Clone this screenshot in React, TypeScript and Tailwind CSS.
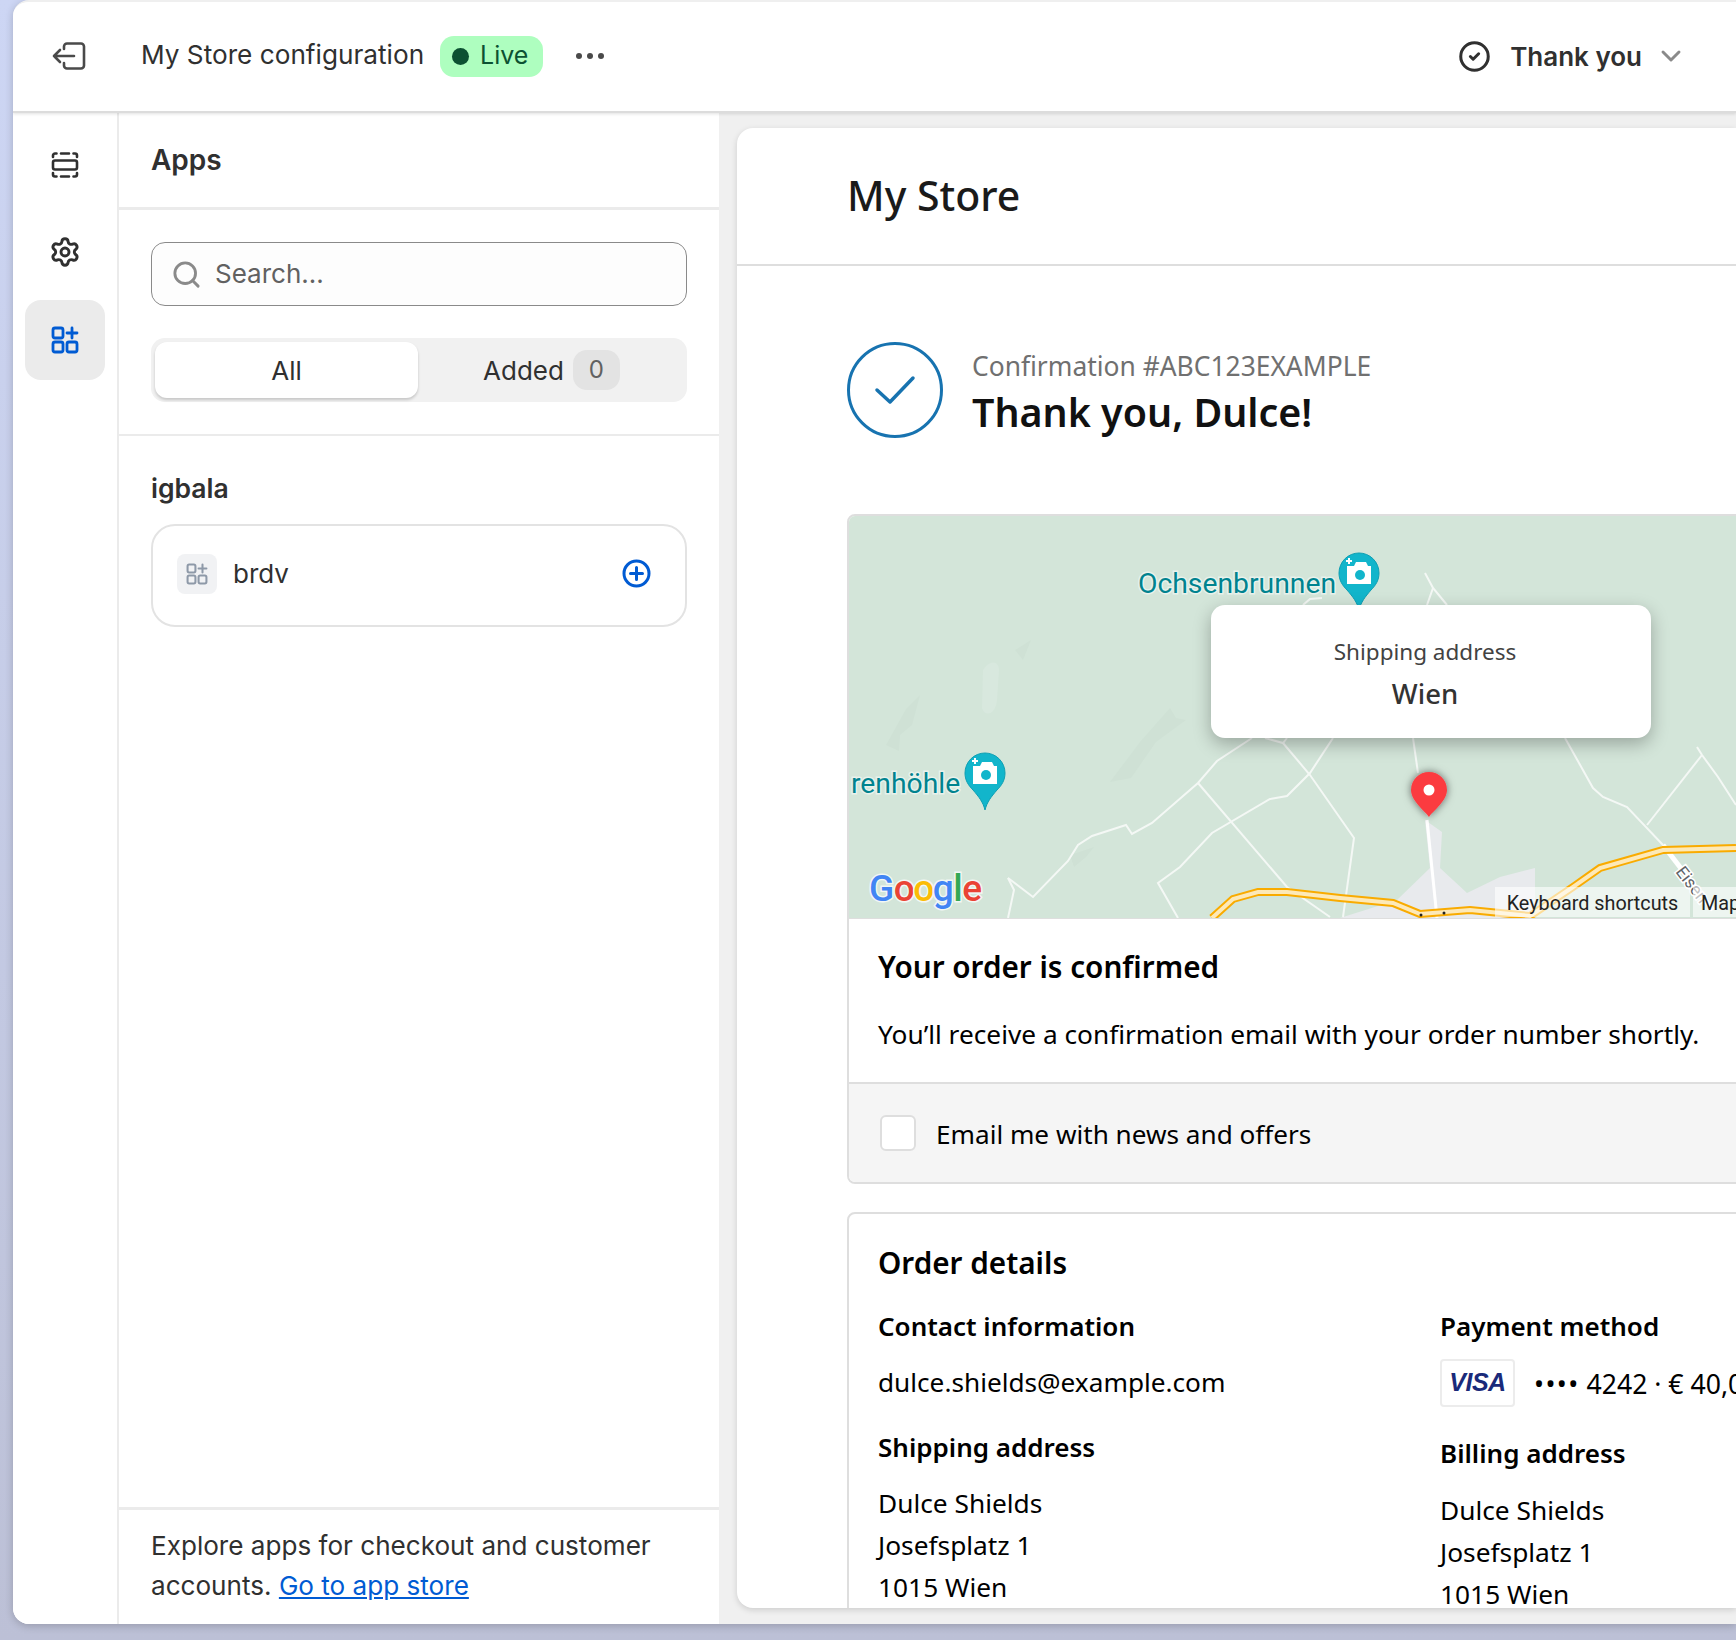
import React from 'react';
import { ChevronDown, CircleCheck, Search, Settings } from 'lucide-react';

const inter = 'font-[Inter,sans-serif]';

const ExitIcon = () => (
  <svg width="36" height="30" viewBox="0 0 36 30" fill="none" stroke="#4a4a4a" strokeWidth="2.6" strokeLinecap="round" strokeLinejoin="round">
    <path d="M13 8V5.5A3 3 0 0 1 16 2.5h14a3 3 0 0 1 3 3v19a3 3 0 0 1-3 3H16a3 3 0 0 1-3-3V22" />
    <path d="M23 15H3M9 9l-6 6 6 6" />
  </svg>
);

const SectionsIcon = () => (
  <svg width="28" height="28" viewBox="0 0 28 28" fill="none" stroke="#303030" strokeWidth="2.6" strokeLinecap="round" strokeLinejoin="round">
    <path d="M2 6V4.5A2 2 0 0 1 4 2.5h1.500M10 2.500h8M22.500 2.500H24a2 2 0 0 1 2 2V6" />
    <rect x="2" y="9.500" width="24" height="9" rx="2" />
    <path d="M2 22v1.500a2 2 0 0 0 2 2h1.500M10 25.500h8M22.500 25.500H24a2 2 0 0 0 2-2V22" />
  </svg>
);

const AppsIcon = ({ color, size, stroke }: { color: string; size: number; stroke: number }) => (
  <svg width={size} height={size} viewBox="0 0 28 28" fill="none" stroke={color} strokeWidth={stroke} strokeLinecap="round" strokeLinejoin="round">
    <rect x="2" y="2" width="10" height="10" rx="2" />
    <rect x="2" y="16" width="10" height="10" rx="2" />
    <rect x="16" y="16" width="10" height="10" rx="2" />
    <path d="M21 2v10M16 7h10" />
  </svg>
);

const CameraPin = ({ x, y }: { x: number; y: number }) => (
  <g transform={`translate(${x} ${y})`}>
    <path d="M20 57c-2-8-6-13-12-20C3 32 0 27 0 20a20 20 0 0 1 40 0c0 7-3 12-8 17-6 7-10 12-12 20z" fill="#12b5cb" stroke="#0e9fb3" strokeWidth="1" />
    <path d="M8 13h7l2-4h10l2 4h3v18H8z" fill="#fff" />
    <circle cx="21" cy="22" r="5" fill="#12b5cb" />
    <path d="M10 11V5M7 8h6" stroke="#fff" strokeWidth="2" />
  </g>
);

const MapArt = () => {
  const roads = [
    '1008,878 1033,897 1068,861 1078,845 1092,836 1126,825 1132,834 1152,823 1198,783 1217,761 1252,738',
    '1008,878 1014,890 1008,918',
    '1198,783 1287,887 1330,917',
    '1178,918 1158,883 1180,867 1212,833 1270,799 1287,796 1310,773 1333,738',
    '1265,738 1283,743 1287,738',
    '1283,743 1310,775 1354,838 1343,917',
    '1425,573 1433,588 1447,605',
    '1433,588 1427,605',
    '1303,605 1310,599 1322,598',
    '1413,738 1418,773',
    '1565,738 1593,788 1603,797 1627,807 1663,845',
    '1647,825 1702,755',
    '1697,747 1702,755 1718,777 1736,805',
  ];
  const highway = '1212,918 1233,899 1258,892 1287,892 1340,898 1393,903 1420,914 1470,910 1530,916 1573,887 1600,868 1663,850 1736,848';
  return (
    <svg className="block" width="889" height="404" viewBox="847 514 889 404">
      <rect x="847" y="514" width="889" height="404" fill="#d3e5d9" />
      <g fill="#cfe1d5">
        <path d="M983 670c8-12 16-8 16 0l-2 30c-1 14-12 18-15 8z" fill="#d8e8de" />
        <path d="M886 745l20-36 14-14-8 30-12 10-1 16z" />
        <path d="M1110 782l30-40 30-34 6 10 10 2-30 22-25 36z" />
        <path d="M1015 650l16-10-8 20z" />
        <path d="M1070 855l24-8-8 10-12 10z" />
      </g>
      <polygon points="1425,820 1442,832 1440,868 1467,893 1500,877 1535,868 1535,918 1340,918 1397,900 1430,868" fill="#e8eaed" />
      {roads.map((points) => (
        <polyline key={points} points={points} fill="none" stroke="#f4f8f5" strokeWidth="2" />
      ))}
      <path d="M1427 820l10 98" stroke="#fff" strokeWidth="3" />
      <path d="M1663 845l50 65" stroke="#fff" strokeWidth="5" />
      <polyline points={highway} fill="none" stroke="#f9ab00" strokeWidth="8" />
      <polyline points={highway} fill="none" stroke="#fde9b8" strokeWidth="4" />
      <circle cx="1421" cy="915" r="1.500" fill="#222" />
      <circle cx="1444" cy="913" r="1.500" fill="#222" />
      <text x="1138" y="593" fontFamily="Roboto, sans-serif" fontSize="28.300" fill="#00838f" stroke="#e8f2ec" strokeWidth="3" paintOrder="stroke">Ochsenbrunnen</text>
      <CameraPin x={1339} y={553} />
      <text x="851" y="793" fontFamily="Roboto, sans-serif" fontSize="28.300" fill="#00838f" stroke="#e8f2ec" strokeWidth="3" paintOrder="stroke">renhöhle</text>
      <CameraPin x={965} y={753} />
      <text transform="translate(1675 872) rotate(52)" fontFamily="Roboto, sans-serif" fontSize="17" fill="#5f6368" stroke="#fff" strokeWidth="3" paintOrder="stroke">Eisen</text>
      <text x="869" y="901" fontFamily="Roboto, sans-serif" fontSize="37" fontWeight="500" stroke="#f2f7f4" strokeWidth="3" paintOrder="stroke">
        <tspan fill="#4285f4">G</tspan>
        <tspan fill="#ea4335" dx="-0.500">o</tspan>
        <tspan fill="#fbbc05" dx="-1.500">o</tspan>
        <tspan fill="#4285f4" dx="-1.500">g</tspan>
        <tspan fill="#34a853" dx="-0.500">l</tspan>
        <tspan fill="#ea4335" dx="-0.500">e</tspan>
      </text>
      <defs>
        <filter id="pinShadow" x="-50%" y="-50%" width="200%" height="200%">
          <feDropShadow dx="0" dy="0" stdDeviation="4" floodColor="#000" floodOpacity="0.55" />
        </filter>
      </defs>
      <path d="M1429 817c-3-5-18-16-18-27a18 18 0 0 1 36 0c0 11-15 22-18 27z" fill="#fb3b41" filter="url(#pinShadow)" />
      <circle cx="1429" cy="790" r="5.500" fill="#fff" />
    </svg>
  );
};

const AddressLines = () => (
  <div className="text-[26.3px] leading-[42px] text-black">
    <div>Dulce Shields</div>
    <div>Josefsplatz 1</div>
    <div>1015 Wien</div>
  </div>
);

const Sidebar = () => (
  <aside className={`w-[600px] shrink-0 flex flex-col bg-white ${inter}`}>
    <div className="h-[97px] shrink-0 flex items-center px-[32px] border-b-[3px] border-[#ebebeb]">
      <h2 className="text-[28px] font-semibold text-[#303030]">Apps</h2>
    </div>
    <div className="h-[226px] shrink-0 px-[32px] pt-[32px] border-b-[2px] border-[#ebebeb]">
      <div className="h-[64px] rounded-[14px] border border-[#8a8a8a] bg-[#fdfdfd] flex items-center pl-[19px] gap-[13px]">
        <Search size={31} strokeWidth={2.200} className="text-[#8a8a8a]" />
        <span className="text-[26px] text-[#616161] -mt-[2px]">Search...</span>
      </div>
      <div className="mt-[32px] h-[64px] rounded-[14px] bg-[#f1f1f1] flex items-center p-[4px]">
        <div className="w-[263px] h-[56px] rounded-[12px] bg-white shadow-[0_2px_3px_rgba(0,0,0,0.18)] flex items-center justify-center text-[26px] text-[#303030]">
          All
        </div>
        <div className="flex-1 flex items-center justify-center gap-[9px] text-[26px] text-[#303030] pl-[2px]">
          <span>Added</span>
          <span className="w-[47px] h-[40px] rounded-[14px] bg-[#e3e3e3] flex items-center justify-center text-[#616161] text-[24px]">0</span>
        </div>
      </div>
    </div>
    <div className="flex-1 px-[32px] pt-[35px]">
      <h3 className="text-[26.5px] font-semibold leading-[34px] text-[#303030]">igbala</h3>
      <div className="mt-[19px] h-[103px] rounded-[24px] border-[2px] border-[#e3e3e3] flex items-center pl-[24px] pr-[34px] pb-[4px]">
        <div className="w-[40px] h-[40px] rounded-[8px] bg-[#f1f2f4] flex items-center justify-center">
          <AppsIcon color="#8e99a8" size={22} stroke={2.600} />
        </div>
        <span className="ml-[16px] flex-1 text-[26px] text-[#303030]">brdv</span>
        <svg width="29" height="29" viewBox="0 0 29 29" fill="none" stroke="#005bd3" strokeWidth="3" strokeLinecap="round">
          <circle cx="14.500" cy="14.500" r="12.500" />
          <path d="M14.500 8.500v12M8.500 14.500h12" />
        </svg>
      </div>
    </div>
    <div className="h-[117px] shrink-0 border-t-[3px] border-[#ebebeb] px-[32px] pt-[16px] text-[26.1px] leading-[40px] text-[#303030]">
      Explore apps for checkout and customer
      <br />
      accounts. <a className="text-[#005bd3] underline underline-offset-2">Go to app store</a>
    </div>
  </aside>
);

const Preview = () => (
  <main className="flex-1 min-w-0 pl-[18px] pt-[15px] pb-[16px] bg-[#f0f0f0]">
    <div className="h-full rounded-l-[16px] bg-white overflow-hidden shadow-[0_2px_6px_rgba(0,0,0,0.15)] font-['Noto_Sans',sans-serif] text-black">
      <div className="h-[138px] flex items-center pl-[110px] border-b-[2px] border-[#dedede]">
        <h1 className="text-[41px] font-medium text-[#1a1a1a] -mt-[1px]">My Store</h1>
      </div>
      <div className="pl-[110px] w-[1250px]">
        <div className="mt-[76px] h-[97px] flex items-start">
          <div className="w-[96px] h-[96px] rounded-full border-[3px] border-[#1773b0] flex items-center justify-center shrink-0">
            <svg width="42" height="30" viewBox="0 0 42 30" fill="none" stroke="#1773b0" strokeWidth="3.500" strokeLinecap="round" strokeLinejoin="round">
              <path d="M3 15l13 12L39 3" />
            </svg>
          </div>
          <div className="ml-[29px] mt-[6px]">
            <div className="text-[26.4px] leading-[36px] text-[#707070]">Confirmation #ABC123EXAMPLE</div>
            <div className="text-[39.4px] leading-[56px] font-semibold text-[#111]">Thank you, Dulce!</div>
          </div>
        </div>

        <section className="mt-[75px] rounded-[8px] border-[2px] border-[#dedede] bg-white overflow-hidden">
          <div className="relative h-[403px] -mt-[2px] -ml-[2px]">
            <MapArt />
            <div className="absolute left-[364px] top-[91px] w-[440px] h-[133px] rounded-[14px] bg-white shadow-[0_6px_18px_rgba(0,0,0,0.28)] pr-[12px] flex flex-col items-center pt-[30px]">
              <div className="text-[22.5px] leading-[34px] text-[#424242]">Shipping address</div>
              <div className="text-[27.5px] leading-[50px] font-medium text-[#333]">Wien</div>
            </div>
            <div className="absolute left-[648px] bottom-0 w-[195px] h-[30px] pt-[4px] bg-white/60 flex items-center justify-center font-[Roboto,sans-serif] text-[19.8px] text-[#222] whitespace-nowrap">
              Keyboard shortcuts
            </div>
            <div className="absolute left-[846px] bottom-0 w-[60px] h-[30px] pt-[4px] bg-white/60 pl-[8px] flex items-center font-[Roboto,sans-serif] text-[19.8px] text-[#222] whitespace-nowrap">
              Map data
            </div>
          </div>
          <div className="h-[165px] px-[29px] pt-[28px] border-t-[2px] border-[#dedede]">
            <h2 className="text-[29.7px] leading-[40px] font-semibold">Your order is confirmed</h2>
            <p className="mt-[27px] text-[26.25px] leading-[40px] whitespace-nowrap">You’ll receive a confirmation email with your order number shortly.</p>
          </div>
          <div className="h-[100px] px-[31px] bg-[#f5f5f5] border-t-[2px] border-[#dedede] flex items-center">
            <span className="w-[36px] h-[36px] rounded-[6px] bg-white border-[2px] border-[#dedede]" />
            <span className="ml-[20px] text-[26.15px] mt-[3px]">Email me with news and offers</span>
          </div>
        </section>

        <section className="mt-[28px] rounded-t-[8px] border-[2px] border-[#dedede] px-[29px] pt-[29px] h-[500px]">
          <h2 className="text-[29.7px] leading-[40px] font-semibold">Order details</h2>
          <div className="mt-[23px] grid grid-cols-[562px_1fr]">
            <div>
              <h3 className="text-[26px] leading-[40px] font-semibold">Contact information</h3>
              <div className="mt-[16px] text-[26.2px] leading-[40px]">dulce.shields@example.com</div>
              <h3 className="mt-[25px] text-[26px] leading-[40px] font-semibold">Shipping address</h3>
              <div className="mt-[15px]"><AddressLines /></div>
            </div>
            <div>
              <h3 className="text-[26px] leading-[40px] font-semibold">Payment method</h3>
              <div className="mt-[13px] flex items-center">
                <span className="w-[75px] h-[48px] rounded-[4px] border-[2px] border-[#ececec] flex items-center justify-center font-['Liberation_Sans',sans-serif] italic font-bold text-[25px] tracking-[-0.5px] text-[#1a2a7a]">VISA</span>
                <span className="ml-[19px] mt-[3px] text-[26.6px] whitespace-nowrap"><span className="tracking-[1.4px]">••••</span> 4242 · € 40,00</span>
              </div>
              <h3 className="mt-[26px] text-[26px] leading-[40px] font-semibold">Billing address</h3>
              <div className="mt-[16px]"><AddressLines /></div>
            </div>
          </div>
        </section>
      </div>
    </div>
  </main>
);

export default function App() {
  return (
    <div className="h-[1640px] w-[1736px] overflow-hidden pl-[13px] pb-[16px] bg-gradient-to-b from-[#cdd6f4] to-[#bcc0d6]">
      <div className="h-full flex flex-col rounded-tl-[16px] rounded-bl-[16px] overflow-hidden bg-white border-t-[2px] border-[#efefef] shadow-[0_2px_8px_rgba(0,0,0,0.2)]">
        {/* Top bar */}
        <header className={`h-[111px] shrink-0 flex items-center bg-white border-b-[2px] border-[#dcdcdc] shadow-[0_1px_3px_rgba(0,0,0,0.12)] z-10 ${inter}`}>
          <div className="ml-[38px] w-[36px] flex -mt-[2px]"><ExitIcon /></div>
          <span className="ml-[54px] text-[26.2px] text-[#303030] -mt-[4px]">My Store configuration</span>
          <span className="ml-[16px] w-[103px] h-[41px] rounded-[14px] bg-[#aefebf] flex items-center pl-[12px] text-[25px] text-[#0c5132] -mt-[1px]">
            <span className="w-[17px] h-[17px] rounded-full bg-[#0c5132]" />
            <span className="ml-[11px]">Live</span>
          </span>
          <span className="ml-[33px] flex gap-[5px] -mt-[1px]">
            <span className="w-[6px] h-[6px] rounded-full bg-[#4a4a4a]" />
            <span className="w-[6px] h-[6px] rounded-full bg-[#4a4a4a]" />
            <span className="w-[6px] h-[6px] rounded-full bg-[#4a4a4a]" />
          </span>
          <div className="ml-auto flex items-center pr-[51px] -mt-[1px]">
            <CircleCheck size={33} strokeWidth={2.200} className="text-[#303030]" />
            <span className="ml-[19px] text-[26px] font-semibold text-[#303030]">Thank you</span>
            <ChevronDown size={32} strokeWidth={2.200} className="ml-[13px] -mr-[2px] text-[#8a8a8a]" />
          </div>
        </header>

        <div className="flex-1 min-h-0 flex">
          {/* Icon rail */}
          <nav className="w-[106px] shrink-0 border-r-[2px] border-[#ebebeb] bg-white flex flex-col items-center pt-[38px]">
            <div className="h-[28px] flex items-center"><SectionsIcon /></div>
            <div className="mt-[58px] h-[30px] flex items-center">
              <Settings size={32} strokeWidth={2.200} className="text-[#303030]" />
            </div>
            <div className="mt-[33px] w-[80px] h-[80px] rounded-[16px] bg-[#ebebeb] flex items-center justify-center">
              <AppsIcon color="#005bd3" size={28} stroke={2.800} />
            </div>
          </nav>
          <Sidebar />
          <Preview />
        </div>
      </div>
    </div>
  );
}
